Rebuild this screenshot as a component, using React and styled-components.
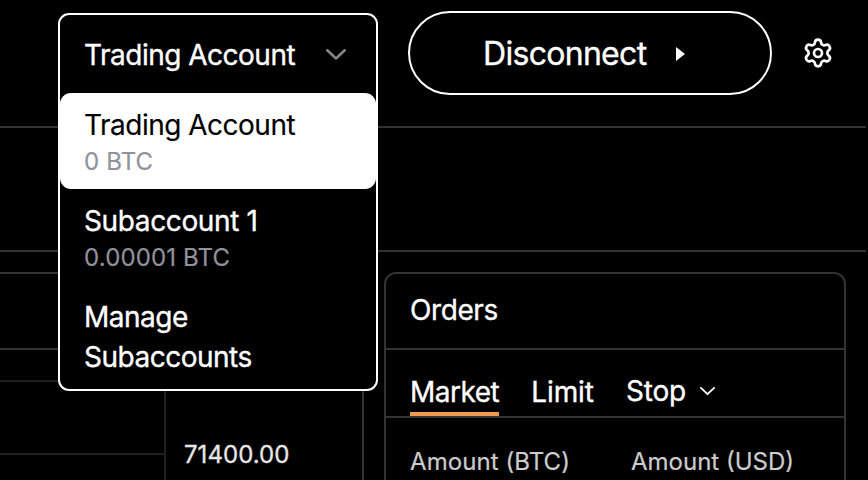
import React from 'react';
import styled, { createGlobalStyle } from 'styled-components';
import { Settings } from 'lucide-react';

const GlobalStyle = createGlobalStyle`
  *, *::before, *::after { box-sizing: border-box; }
  body { margin: 0; background: #000; }
`;

const line = '#333333';
const faintLine = '#1f1f1f';

const Page = styled.div`
  display: flex;
  flex-direction: column;
  width: 868px;
  height: 480px;
  padding-right: 2px;
  overflow: hidden;
  background: #000;
  color: #fff;
  font-family: Inter, 'Liberation Sans', sans-serif;
  font-size: 28px;
  font-weight: 400;
  line-height: 40px;
  white-space: nowrap;
  -webkit-text-stroke: 0.35px currentColor;
`;

const Header = styled.header`
  display: flex;
  align-items: flex-start;
  flex: 0 0 128px;
  padding: 11px 0 0 58px;
  border-bottom: 2px solid ${line};
`;

const AccountSelect = styled.div`
  position: relative;
  width: 320px;
  height: 80px;
  margin: 2px 30px 0 0;
`;

const AccountMenu = styled.div`
  position: absolute;
  top: 0;
  left: 0;
  z-index: 1;
  width: 320px;
  height: 378px;
  border: 2px solid #fff;
  border-radius: 11px;
  background: #000;
`;

const Trigger = styled.div`
  display: flex;
  align-items: center;
  justify-content: space-between;
  height: 78px;
  padding: 1px 30px 0 24px;
`;

const Option = styled.div`
  display: flex;
  flex-direction: column;
  height: 96px;
  padding: 12px 24px 0;
  border-radius: 11px;
  background: ${(p) => (p.$selected ? '#fff' : 'transparent')};
  color: ${(p) => (p.$selected ? '#000' : '#fff')};
  -webkit-text-stroke: ${(p) => (p.$selected ? 0.15 : 0.35)}px currentColor;
  white-space: normal;
`;

const Label = styled.span`
  letter-spacing: ${(p) => p.$spacing || 0}px;
`;

const Balance = styled.span`
  color: #92929c;
  font-size: 24px;
  line-height: 34px;
  letter-spacing: 0.15px;
  -webkit-text-stroke: 0.2px currentColor;
`;

const DisconnectButton = styled.button`
  display: flex;
  align-items: center;
  gap: 30px;
  width: 364px;
  height: 84px;
  padding: 2px 0 0 73px;
  border: 2px solid #fff;
  border-radius: 42px;
  background: transparent;
  color: #fff;
  font: inherit;
  font-size: 32px;
`;

const SettingsButton = styled.div`
  display: flex;
  margin: 26px 0 0 30px;
`;

const Ticker = styled.div`
  flex: 0 0 124px;
  border-bottom: 2px solid ${line};
`;

const Workspace = styled.main`
  display: flex;
  gap: 20px;
  flex: 1;
  padding-top: 20px;
`;

const ChartPanel = styled.section`
  display: flex;
  flex-direction: column;
  width: 364px;
  border: 2px solid ${line};
  border-width: 2px 2px 0 0;
  border-top-right-radius: 12px;
`;

const ChartHeader = styled.div`
  flex: 0 0 76px;
  border-bottom: 2px solid ${line};
`;

const ChartBody = styled.div`
  display: flex;
  flex: 1;
`;

const Plot = styled.div`
  width: 166px;
  border-right: 2px solid ${faintLine};
`;

const GridRow = styled.div`
  height: ${(p) => p.$height}px;
  border-bottom: 2px solid ${faintLine};
`;

const PriceAxis = styled.div`
  padding: 85px 0 0 18px;
  color: #e6e6e6;
  font-size: 24px;
`;

const OrdersPanel = styled.section`
  width: 462px;
  border: 2px solid ${line};
  border-bottom: 0;
  border-radius: 12px 12px 0 0;
`;

const PanelTitle = styled.div`
  height: 76px;
  padding: 16px 24px 0;
  border-bottom: 2px solid ${line};
`;

const Tabs = styled.div`
  display: flex;
  gap: 32px;
  height: 68px;
  padding-left: 24px;
  border-bottom: 2px solid ${line};
`;

const Tab = styled.div`
  display: flex;
  align-items: center;
  gap: 14px;
  height: 66px;
  padding-top: ${(p) => (p.$raised ? 20 : 22)}px;
  border-bottom: 4px solid ${(p) => (p.$active ? '#f09a4f' : 'transparent')};
`;

const Fields = styled.div`
  display: grid;
  grid-template-columns: 221px 1fr;
  padding: 24px 0 0 24px;
  color: #ccc;
  font-size: 24px;
  -webkit-text-stroke: 0.2px currentColor;
`;

function Chevron({ width, height, color, weight }) {
  return (
    <svg width={width} height={height} viewBox={`0 0 ${width} ${height}`} fill="none">
      <path
        d={`M${weight / 2} ${weight / 2}L${width / 2} ${height - weight}L${width - weight / 2} ${weight / 2}`}
        stroke={color}
        strokeWidth={weight}
        strokeLinecap="round"
        strokeLinejoin="round"
      />
    </svg>
  );
}

export default function App() {
  return (
    <Page>
      <GlobalStyle />
      <Header>
        <AccountSelect>
          <AccountMenu>
            <Trigger>
              <Label $spacing={-0.5}>Trading Account</Label>
              <Chevron width={20} height={12} color="#858585" weight={2.5} />
            </Trigger>
            <Option $selected>
              <Label $spacing={-0.5}>Trading Account</Label>
              <Balance>0 BTC</Balance>
            </Option>
            <Option>
              <Label $spacing={-0.37}>Subaccount 1</Label>
              <Balance>0.00001 BTC</Balance>
            </Option>
            <Option>
              <Label $spacing={-0.5}>Manage Subaccounts</Label>
            </Option>
          </AccountMenu>
        </AccountSelect>
        <DisconnectButton>
          <Label $spacing={-0.7}>Disconnect</Label>
          <svg width="9" height="14" viewBox="0 0 9 14">
            <path d="M0 0L9 7L0 14Z" fill="#fff" />
          </svg>
        </DisconnectButton>
        <SettingsButton>
          <Settings size={32} color="#fff" strokeWidth={2} />
        </SettingsButton>
      </Header>
      <Ticker />
      <Workspace>
        <ChartPanel>
          <ChartHeader />
          <ChartBody>
            <Plot>
              <GridRow $height={32} />
              <GridRow $height={73} />
            </Plot>
            <PriceAxis>
              <Label $spacing={0.04}>71400.00</Label>
            </PriceAxis>
          </ChartBody>
        </ChartPanel>
        <OrdersPanel>
          <PanelTitle>
            <Label $spacing={-0.4}>Orders</Label>
          </PanelTitle>
          <Tabs>
            <Tab $active>
              <Label $spacing={-0.5}>Market</Label>
            </Tab>
            <Tab>
              <Label $spacing={-0.08}>Limit</Label>
            </Tab>
            <Tab $raised>
              <Label $spacing={-0.15}>Stop</Label>
              <Chevron width={15} height={9} color="#fff" weight={1.8} />
            </Tab>
          </Tabs>
          <Fields>
            <Label $spacing={0.08}>Amount (BTC)</Label>
            <Label>Amount (USD)</Label>
          </Fields>
        </OrdersPanel>
      </Workspace>
    </Page>
  );
}
